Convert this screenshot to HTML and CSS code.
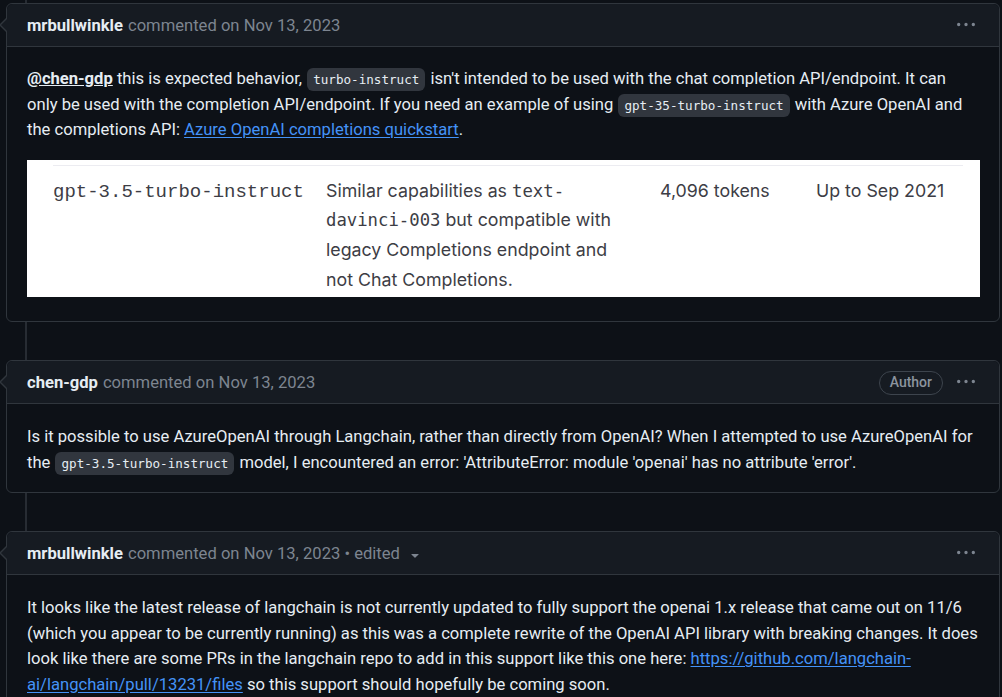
FILE: index.html
```html
<!DOCTYPE html>
<html>
<head>
<meta charset="utf-8">
<title>Comments</title>
<link rel="stylesheet" href="styles.css">
</head>
<body>
<div class="timeline">
  <div class="rail rail-top"></div>

  <div class="comment">
    <div class="comment-header">
      <div class="meta"><a class="author">mrbullwinkle</a> commented on Nov 13, 2023</div>
      <div class="actions">
        <svg class="kebab" viewBox="0 0 16 16" width="18" height="18"><path d="M8 9a1.5 1.5 0 1 0 0-3 1.5 1.5 0 0 0 0 3ZM1.5 9a1.5 1.5 0 1 0 0-3 1.5 1.5 0 0 0 0 3Zm13 0a1.5 1.5 0 1 0 0-3 1.5 1.5 0 0 0 0 3Z"/></svg>
      </div>
    </div>
    <div class="comment-body body-first">
      <p><a class="mention">@chen-gdp</a> this is expected behavior, <code class="code">turbo-instruct</code> isn't intended to be used with the chat completion API/endpoint. It can only be used with the completion API/endpoint. If you need an example of using <code class="code">gpt-35-turbo-instruct</code> with Azure OpenAI and the completions API: <a class="link">Azure OpenAI completions quickstart</a>.</p>
      <div class="pasted">
        <table>
          <colgroup><col class="c1"><col class="c2"><col class="c3"><col class="c4"></colgroup>
          <tr>
            <td><span class="mono-lg">gpt-3.5-turbo-instruct</span></td>
            <td class="desc">Similar capabilities as <span class="mono-sm">text-davinci-003</span> but compatible with legacy Completions endpoint and not Chat Completions.</td>
            <td>4,096 tokens</td>
            <td>Up to Sep 2021</td>
          </tr>
        </table>
      </div>
    </div>
  </div>

  <div class="rail"></div>

  <div class="comment">
    <div class="comment-header">
      <div class="meta"><a class="author">chen-gdp</a> commented on Nov 13, 2023</div>
      <div class="actions">
        <span class="badge">Author</span>
        <svg class="kebab" viewBox="0 0 16 16" width="18" height="18"><path d="M8 9a1.5 1.5 0 1 0 0-3 1.5 1.5 0 0 0 0 3ZM1.5 9a1.5 1.5 0 1 0 0-3 1.5 1.5 0 0 0 0 3Zm13 0a1.5 1.5 0 1 0 0-3 1.5 1.5 0 0 0 0 3Z"/></svg>
      </div>
    </div>
    <div class="comment-body">
      <p>Is it possible to use AzureOpenAI through Langchain, rather than directly from OpenAI? When I attempted to use AzureOpenAI for the <code class="code">gpt-3.5-turbo-instruct</code> model, I encountered an error: 'AttributeError: module 'openai' has no attribute 'error'.</p>
    </div>
  </div>

  <div class="rail"></div>

  <div class="comment">
    <div class="comment-header">
      <div class="meta"><a class="author">mrbullwinkle</a> commented on Nov 13, 2023 • edited <svg class="caret" viewBox="0 0 16 16" width="16" height="16"><path d="m4.427 7.427 3.396 3.396a.25.25 0 0 0 .354 0l3.396-3.396A.25.25 0 0 0 11.396 7H4.604a.25.25 0 0 0-.177.427Z"/></svg></div>
      <div class="actions">
        <svg class="kebab" viewBox="0 0 16 16" width="18" height="18"><path d="M8 9a1.5 1.5 0 1 0 0-3 1.5 1.5 0 0 0 0 3ZM1.5 9a1.5 1.5 0 1 0 0-3 1.5 1.5 0 0 0 0 3Zm13 0a1.5 1.5 0 1 0 0-3 1.5 1.5 0 0 0 0 3Z"/></svg>
      </div>
    </div>
    <div class="comment-body">
      <p>It looks like the latest release of langchain is not currently updated to fully support the openai 1.x release that came out on 11/6 (which you appear to be currently running) as this was a complete rewrite of the OpenAI API library with breaking changes. It does look like there are some PRs in the langchain repo to add in this support like this one here: <a class="link">https://github.com/langchain-ai/langchain/pull/13231/files</a> so this support should hopefully be coming soon.</p>
    </div>
  </div>
</div>
</body>
</html>
```

FILE: styles.css
```css
* { box-sizing: border-box; }

html, body {
  margin: 0;
  padding: 0;
  background: #0d1117;
}

body {
  font-family: Roboto, "Liberation Sans", Arial, sans-serif;
  font-size: 16.6px;
  line-height: 25.5px;
  color: #e6edf3;
  overflow: hidden;
}

.timeline {
  display: flex;
  flex-direction: column;
}

.rail {
  width: 2px;
  height: 38px;
  margin-left: 25px;
  background: #272c33;
}

.rail-top { height: 3px; }

.comment {
  margin: 0 2px 0 6px;
  border: 1px solid #30363d;
  border-radius: 6px;
  background: #0d1117;
}

.comment-header {
  position: relative;
  display: flex;
  align-items: center;
  height: 43px;
  padding: 0 24px 0 20px;
  background: #161b22;
  border-bottom: 1px solid #30363d;
  border-radius: 6px 6px 0 0;
  color: #7d8590;
  white-space: nowrap;
}

.comment-header::before,
.comment-header::after {
  content: "";
  position: absolute;
  top: 13px;
  width: 0;
  height: 0;
  border-style: solid;
  border-color: transparent;
}

.comment-header::before {
  left: -8px;
  border-width: 8px 8px 8px 0;
  border-right-color: #30363d;
}

.comment-header::after {
  left: -6px;
  top: 14px;
  border-width: 7px 7px 7px 0;
  border-right-color: #161b22;
}

.meta {
  flex: 1;
  display: flex;
  align-items: center;
  padding-top: 1px;
}

.author {
  color: #e6edf3;
  font-weight: 700;
  margin-right: 5px;
}

.caret {
  fill: #7d8590;
  margin-left: 7px;
  margin-top: 2px;
}

.actions {
  display: flex;
  align-items: center;
  gap: 14px;
}

.kebab { fill: #7d8590; display: block; }

.badge {
  display: inline-flex;
  align-items: center;
  height: 24px;
  padding: 0 10px;
  border: 1px solid #3d444d;
  border-radius: 12px;
  font-size: 14px;
  font-weight: 500;
  color: #8b949e;
  margin-top: 1px;
}

.comment-body {
  padding: 20px 19px 17px 20px;
}

.body-first { padding-top: 19px; padding-bottom: 24px; }

p { margin: 0; }

.mention {
  color: #e6edf3;
  font-weight: 700;
  text-decoration: underline;
}

.link {
  color: #4493f8;
  text-decoration: underline;
  text-underline-offset: 2px;
}

.code {
  font-family: "DejaVu Sans Mono", "Liberation Mono", monospace;
  font-size: 12.6px;
  line-height: 1;
  padding: 4px 6px;
  margin: 0 1px;
  border-radius: 6px;
  background: #31363e;
  color: #e6edf3;
}

.pasted {
  margin-top: 17px;
  padding: 5px 17px 3px 26px;
  background: #ffffff;
}

.pasted table {
  width: 100%;
  border-collapse: collapse;
  table-layout: fixed;
  border-top: 1px solid #ececf1;
  font-family: Inter, "Noto Sans", sans-serif;
  font-size: 17.8px;
  line-height: 29.7px;
  color: #3d3d45;
}

.c1 { width: 273px; }
.c2 { width: 334px; }
.c3 { width: 156px; }

.pasted td {
  padding: 10px 0 0 0;
  vertical-align: top;
}

.pasted td.desc { padding-right: 34px; }

.mono-lg {
  font-family: "Liberation Mono", monospace;
  font-size: 19px;
  line-height: 1;
}

.mono-sm {
  font-family: "DejaVu Sans Mono", monospace;
  font-size: 17.3px;
  line-height: 1;
}
```
